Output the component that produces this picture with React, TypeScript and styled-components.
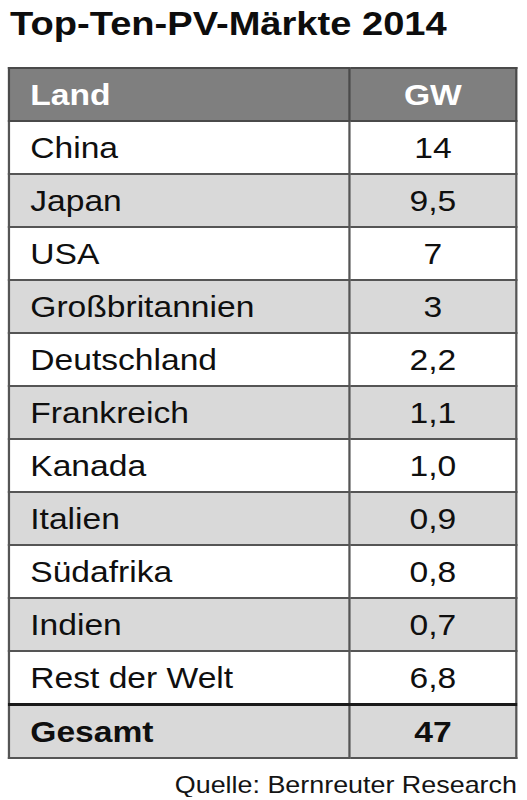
import styled, { createGlobalStyle } from "styled-components";

// the source image is stretched horizontally, so the sheet is drawn narrow and widened
const STRETCH = 1.12;

const GlobalStyle = createGlobalStyle`
  html, body {
    margin: 0;
    padding: 0;
    background: #ffffff;
  }
  body {
    font-family: "Liberation Sans", Arial, sans-serif;
    color: #111111;
  }
`;

const Page = styled.div`
  width: ${527 / STRETCH}px;
  transform: scaleX(${STRETCH});
  transform-origin: left top;
  padding-top: 7px;
`;

const Title = styled.h1`
  margin: 0 0 27px 0;
  padding-left: 9px;
  font-size: 34px;
  line-height: 33px;
  font-weight: 700;
  color: #0d0d0d;
`;

const Table = styled.table`
  margin-left: 7px;
  width: 455px;
  border-collapse: collapse;
  border: 2px solid #4a4a4a;
`;

const Row = styled.tr<{ $shade?: boolean; $total?: boolean }>`
  background: ${(p) => (p.$shade ? "#d9d9d9" : "#ffffff")};
  ${(p) => p.$total && "border-top: 3px solid #1a1a1a;"}
`;

const HeadRow = styled.tr`
  background: #7f7f7f;
`;

const Cell = styled.td<{ $num?: boolean; $bold?: boolean }>`
  height: 51px;
  padding: 0 0 0 ${(p) => (p.$num ? 0 : 18)}px;
  border: 2px solid #555555;
  font-size: 30px;
  line-height: 30px;
  font-weight: ${(p) => (p.$bold ? 700 : 400)};
  text-align: ${(p) => (p.$num ? "center" : "left")};
  vertical-align: middle;
  width: ${(p) => (p.$num ? "auto" : "284px")};
  color: #0f0f0f;
`;

const HeadCell = styled(Cell).attrs({ as: "th" })`
  color: #ffffff;
  font-weight: 700;
  border-color: #4a4a4a;
`;

const Source = styled.div`
  margin-top: 14px;
  padding-right: 9px;
  text-align: right;
  font-size: 24px;
  line-height: 24px;
  color: #141414;
`;

const markets: [string, string][] = [
  ["China", "14"],
  ["Japan", "9,5"],
  ["USA", "7"],
  ["Großbritannien", "3"],
  ["Deutschland", "2,2"],
  ["Frankreich", "1,1"],
  ["Kanada", "1,0"],
  ["Italien", "0,9"],
  ["Südafrika", "0,8"],
  ["Indien", "0,7"],
  ["Rest der Welt", "6,8"],
];

export default function App() {
  return (
    <>
      <GlobalStyle />
      <Page>
        <Title>Top-Ten-PV-Märkte 2014</Title>
        <Table>
          <thead>
            <HeadRow>
              <HeadCell>Land</HeadCell>
              <HeadCell $num>GW</HeadCell>
            </HeadRow>
          </thead>
          <tbody>
            {markets.map(([land, gw], i) => (
              <Row key={land} $shade={i % 2 === 1}>
                <Cell>{land}</Cell>
                <Cell $num>{gw}</Cell>
              </Row>
            ))}
            <Row $shade $total>
              <Cell $bold>Gesamt</Cell>
              <Cell $num $bold>47</Cell>
            </Row>
          </tbody>
        </Table>
        <Source>Quelle: Bernreuter Research</Source>
      </Page>
    </>
  );
}
